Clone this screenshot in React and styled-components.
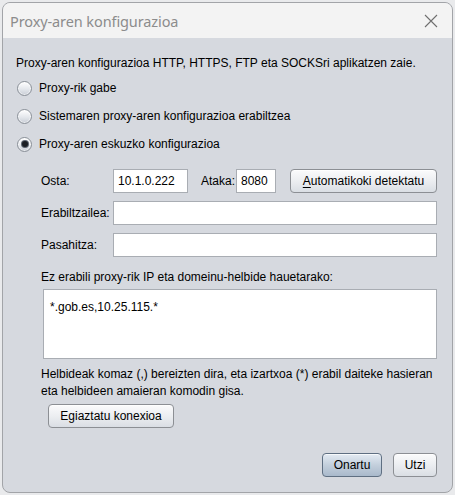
import React from "react";
import styled, { createGlobalStyle } from "styled-components";

const Global = createGlobalStyle`
  html, body { margin: 0; padding: 0; background: #e9eaec; }
  body { font-family: "Liberation Sans", Arial, sans-serif; }
  * { box-sizing: border-box; }
`;

const Page = styled.div`
  padding: 2px 0 0 2px;
  width: 455px;
  height: 495px;
`;

const Window = styled.div`
  width: 451px;
  height: 491px;
  border: 1px solid #a2a4a8;
  border-radius: 8px;
  overflow: hidden;
  background: #d6d9df;
  display: flex;
  flex-direction: column;
`;

const TitleBar = styled.div`
  height: 35px;
  flex: none;
  background: #f3f3f3;
  display: flex;
  align-items: center;
  justify-content: space-between;
  padding: 0 14px 0 7px;
`;

const Title = styled.span`
  font-family: "Noto Sans", "Open Sans", sans-serif;
  font-size: 14.5px;
  color: #8c8c8c;
  letter-spacing: -0.1px;
`;

const Content = styled.div`
  flex: 1;
  display: flex;
  flex-direction: column;
  padding: 17px 15px 0 13px;
  font-size: 12px;
  color: #000;
`;

const Line = styled.div`
  line-height: 16px;
  height: 16px;
  white-space: nowrap;
  margin-left: ${(p) => p.$indent || 0}px;
  margin-top: ${(p) => p.$top || 0}px;
`;

const RadioGroup = styled.div`
  margin-top: 3px;
  display: flex;
  flex-direction: column;
`;

const RadioRow = styled.label`
  height: 28px;
  display: flex;
  align-items: center;
  gap: 7px;
  padding-left: 1px;
`;

const RadioCircle = styled.span`
  width: 15px;
  height: 15px;
  border-radius: 50%;
  border: 1px solid #8a9098;
  background: linear-gradient(#ffffff, #e4e7ec 55%, #c9ced6);
  display: flex;
  align-items: center;
  justify-content: center;
  box-shadow: inset 0 0 0 1px rgba(255,255,255,0.6);
  &::after {
    content: "";
    display: ${(p) => (p.$checked ? "block" : "none")};
    width: 6px;
    height: 6px;
    border-radius: 50%;
    background: #1b1f25;
    box-shadow: 0 0 0 1px #5c6470;
  }
`;

const Form = styled.div`
  margin-top: 11px;
  margin-left: 25px;
  display: flex;
  flex-direction: column;
  gap: 8px;
`;

const FieldRow = styled.div`
  display: flex;
  align-items: center;
  height: 24px;
`;

const Label = styled.span`
  width: ${(p) => p.$w}px;
  flex: none;
  white-space: nowrap;
`;

const Input = styled.div`
  height: 24px;
  width: ${(p) => (p.$w ? `${p.$w}px` : "auto")};
  flex: ${(p) => (p.$w ? "none" : "1")};
  background: #fff;
  border: 1px solid #a9adb3;
  padding-left: 4px;
  display: flex;
  align-items: center;
  white-space: nowrap;
  margin-right: ${(p) => p.$mr || 0}px;
`;

const Button = styled.button`
  font-family: "Liberation Sans", Arial, sans-serif;
  font-size: 12px;
  color: #000;
  height: 24px;
  width: ${(p) => p.$w}px;
  flex: none;
  border: 1px solid ${(p) => (p.$default ? "#5f6f82" : "#8c8f94")};
  border-radius: 4px;
  background: ${(p) =>
    p.$default
      ? "linear-gradient(#e4ebf3, #c3cfdc 50%, #a9b9cb)"
      : "linear-gradient(#fbfbfc, #eceef1 50%, #dadee4)"};
  box-shadow: inset 0 1px 0 rgba(255,255,255,0.7);
  padding: 0;
  margin: 0;
  u { text-decoration: underline; text-underline-offset: 2px; }
`;

const Area = styled.div`
  margin-top: 4px;
  margin-left: 27px;
  height: 70px;
  background: #fff;
  border: 1px solid #a9adb3;
  padding: 9px 0 0 6px;
  line-height: 16px;
`;

const Help = styled.div`
  margin-top: 7px;
  margin-left: 25px;
  line-height: 17px;
`;

const ButtonWrap = styled.div`
  margin-top: 4px;
  margin-left: 32px;
`;

const Footer = styled.div`
  margin-top: 25px;
  display: flex;
  justify-content: flex-end;
  gap: 11px;
`;

const CloseIcon = () => (
  <svg width="14" height="14" viewBox="0 0 14 14">
    <path d="M1 1 L13 13 M13 1 L1 13" stroke="#6f6f6f" strokeWidth="1.1" fill="none" />
  </svg>
);

export default function App() {
  return (
    <Page>
      <Global />
      <Window>
        <TitleBar>
          <Title>Proxy-aren konfigurazioa</Title>
          <CloseIcon />
        </TitleBar>
        <Content>
          <Line>Proxy-aren konfigurazioa HTTP, HTTPS, FTP eta SOCKSri aplikatzen zaie.</Line>
          <RadioGroup>
            <RadioRow><RadioCircle />Proxy-rik gabe</RadioRow>
            <RadioRow><RadioCircle />Sistemaren proxy-aren konfigurazioa erabiltzea</RadioRow>
            <RadioRow><RadioCircle $checked />Proxy-aren eskuzko konfigurazioa</RadioRow>
          </RadioGroup>
          <Form>
            <FieldRow>
              <Label $w={72}>Osta:</Label>
              <Input $w={75} $mr={13}>10.1.0.222</Input>
              <Label $w={35}>Ataka:</Label>
              <Input $w={40} $mr={14}>8080</Input>
              <Button $w={147}><u>A</u>utomatikoki detektatu</Button>
            </FieldRow>
            <FieldRow>
              <Label $w={72}>Erabiltzailea:</Label>
              <Input />
            </FieldRow>
            <FieldRow>
              <Label $w={72}>Pasahitza:</Label>
              <Input />
            </FieldRow>
          </Form>
          <Line $indent={25} $top={12}>Ez erabili proxy-rik IP eta domeinu-helbide hauetarako:</Line>
          <Area>*.gob.es,10.25.115.*</Area>
          <Help>
            Helbideak komaz (,) bereizten dira, eta izartxoa (*) erabil daiteke hasieran
            <br />
            eta helbideen amaieran komodin gisa.
          </Help>
          <ButtonWrap>
            <Button $w={126}>Egiaztatu konexioa</Button>
          </ButtonWrap>
          <Footer>
            <Button $w={60} $default>Onartu</Button>
            <Button $w={44}>Utzi</Button>
          </Footer>
        </Content>
      </Window>
    </Page>
  );
}
